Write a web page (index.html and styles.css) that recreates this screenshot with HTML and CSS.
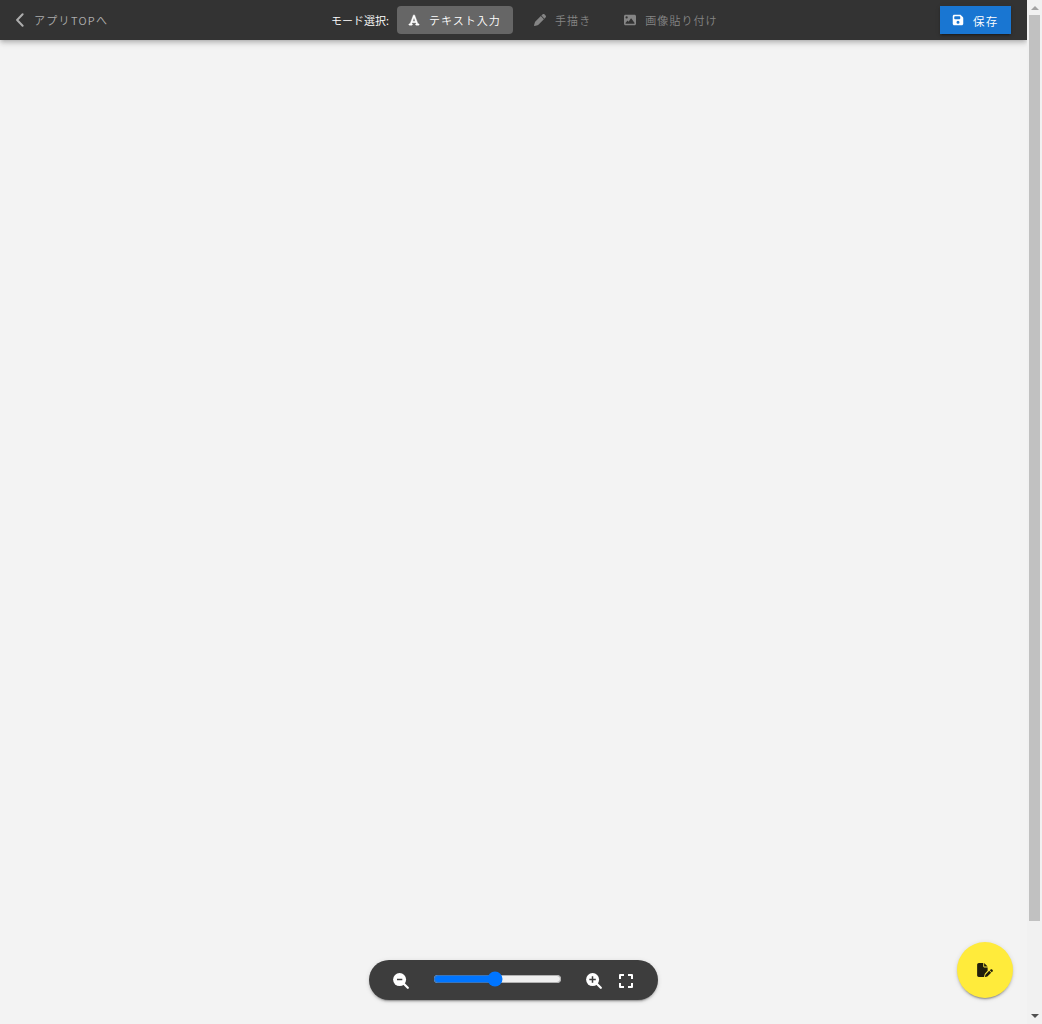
FILE: index.html
```html
<!DOCTYPE html>
<html lang="ja">
<head>
<meta charset="utf-8">
<title>エディター</title>
<link rel="stylesheet" href="styles.css">
</head>
<body>
<div class="app">
  <header class="toolbar">
    <a class="back">
      <svg class="back-icon" viewBox="0 0 8 14"><path d="M6.600 1.200 1.100 7l5.500 5.800" fill="none" stroke="currentColor" stroke-width="2" stroke-linecap="round" stroke-linejoin="round"/></svg>
      <span>アプリTOPへ</span>
    </a>
    <div class="modes">
      <span class="modes-label">モード選択:</span>
      <button class="mode mode-active">
        <svg class="mode-icon mode-icon-text" viewBox="0 0 448 512"><path d="M254 52.800C249.300 40.300 237.300 32 224 32S198.700 40.300 194 52.800L57.800 416H32c-17.700 0-32 14.300-32 32s14.300 32 32 32h96c17.700 0 32-14.300 32-32s-14.300-32-32-32h-1.800l18-48h159.600l18 48H320c-17.700 0-32 14.300-32 32s14.300 32 32 32h96c17.700 0 32-14.300 32-32s-14.300-32-32-32h-25.800L254 52.800zM279.800 304H168.200L224 155.100 279.800 304z" fill="currentColor" stroke="currentColor" stroke-width="16"/></svg>
        <span>テキスト入力</span>
      </button>
      <button class="mode">
        <svg class="mode-icon" viewBox="0 0 512 512"><path fill="currentColor" d="M362.700 19.300 314.300 67.700 444.300 197.700l48.400-48.400c25-25 25-65.500 0-90.500L453.300 19.300c-25-25-65.500-25-90.500 0zM291.700 90.300 58.600 323.500c-10.400 10.400-18 23.300-22.200 37.400L1 481.200C-1.500 489.700.8 498.800 7 505s15.300 8.500 23.700 6.100l120.300-35.400c14.100-4.200 27-11.800 37.400-22.200L421.700 220.300 291.700 90.300z"/></svg>
        <span>手描き</span>
      </button>
      <button class="mode">
        <svg class="mode-icon" viewBox="0 0 512 512"><path fill="currentColor" d="M0 96c0-35.300 28.700-64 64-64h384c35.300 0 64 28.700 64 64v320c0 35.300-28.700 64-64 64H64c-35.300 0-64-28.700-64-64V96zm323.800 106.500c-4.500-6.600-11.900-10.500-19.800-10.500s-15.400 3.900-19.800 10.500l-87 127.600-26.500-33.100c-4.600-5.700-11.500-9-18.700-9s-14.200 3.300-18.700 9l-64 80c-5.800 7.200-6.900 17.100-2.900 25.400S78.800 416 88 416h336c8.900 0 17.100-4.900 21.200-12.800s3.600-17.400-1.400-24.700l-120-176zM112 192a48 48 0 1 0 0-96 48 48 0 1 0 0 96z"/></svg>
        <span>画像貼り付け</span>
      </button>
    </div>
    <button class="save">
      <svg class="save-icon" viewBox="0 0 448 512"><path fill="currentColor" d="M64 32C28.700 32 0 60.700 0 96v320c0 35.300 28.700 64 64 64h320c35.300 0 64-28.700 64-64V173.300c0-17-6.700-33.300-18.700-45.300L352 50.700C340 38.700 323.700 32 306.700 32H64zm0 96c0-17.700 14.300-32 32-32h192c17.700 0 32 14.300 32 32v64c0 17.700-14.300 32-32 32H96c-17.700 0-32-14.300-32-32v-64zm160 160a64 64 0 1 1 0 128 64 64 0 1 1 0-128z"/></svg>
      <span>保存</span>
    </button>
  </header>
  <main class="canvas">
    <div class="zoombar">
      <svg class="zoom-icon" viewBox="0 0 16 16"><circle cx="6.600" cy="6.600" r="6.500" fill="currentColor"/><path d="m10.500 10.500 4.300 4.300" stroke="currentColor" stroke-width="2.200" stroke-linecap="round"/><path class="zoom-sign" d="M4 6.500h5.300"/></svg>
      <input class="zoom-range" type="range" min="0" max="100" value="48">
      <svg class="zoom-icon" viewBox="0 0 16 16"><circle cx="6.600" cy="6.600" r="6.500" fill="currentColor"/><path d="m10.500 10.500 4.300 4.300" stroke="currentColor" stroke-width="2.200" stroke-linecap="round"/><path class="zoom-sign" d="M3.300 6.500h6.500M6.500 3.300v6.500"/></svg>
      <svg class="full-icon" viewBox="0 0 14 14"><path d="M1 5V1h4M9 1h4v4M13 9v4H9M5 13H1V9" fill="none" stroke="currentColor" stroke-width="2" stroke-linejoin="round"/></svg>
    </div>
    <button class="fab">
      <svg class="fab-icon" viewBox="0 0 576 512"><path fill="currentColor" d="M0 64C0 28.700 28.700 0 64 0h160v128c0 17.700 14.300 32 32 32h128v125.700l-86.800 86.800c-10.300 10.300-17.500 23.100-21 37.200l-18.700 74.900c-2.300 9.200-1.800 18.800 1.300 27.500H64c-35.300 0-64-28.700-64-64V64zm384 64H256V0l128 128zm165.800 112.100 14.400 14.400c15.600 15.600 15.600 40.900 0 56.600l-29.400 29.400-71-71 29.400-29.400c15.600-15.600 40.900-15.600 56.600 0zM311.900 417l129.200-129.200 71 71L382.900 487.900c-4.100 4.100-9.200 7-14.900 8.400l-60.100 15c-5.500 1.400-11.200-.2-15.200-4.200s-5.600-9.700-4.200-15.200l15-60.100c1.400-5.600 4.300-10.800 8.400-14.900z"/></svg>
    </button>
  </main>
</div>
<div class="scrollbar">
  <svg class="arrow arrow-up" viewBox="0 0 8 4"><path d="M0 4 4 0l4 4z"/></svg>
  <div class="thumb"></div>
  <svg class="arrow" viewBox="0 0 8 4"><path d="m0 0 4 4 4-4z"/></svg>
</div>
</body>
</html>
```
FILE: styles.css
```css
* { box-sizing: border-box; }

body {
  margin: 0;
  height: 100vh;
  display: flex;
  overflow: hidden;
  background: #f3f3f3;
  font-family: "Noto Sans CJK JP", sans-serif;
  font-size: 11px;
  font-weight: 350;
}

svg { display: block; flex: none; }

button {
  display: flex;
  align-items: center;
  border: 0;
  background: none;
  font: inherit;
  white-space: nowrap;
}

.app {
  flex: 1;
  display: flex;
  flex-direction: column;
  overflow: hidden;
}

.toolbar {
  height: 40px;
  flex: none;
  display: grid;
  grid-template-columns: 331px 1fr auto;
  align-items: center;
  padding-right: 16px;
  background: #333;
  color: #fff;
  box-shadow: 0 2px 4px -1px rgba(0,0,0,.2), 0 4px 5px rgba(0,0,0,.1), 0 1px 8px rgba(0,0,0,.06);
}

.back {
  display: flex;
  align-items: center;
  gap: 10px;
  padding-left: 16px;
  color: #adadad;
  letter-spacing: 1.3px;
}

.back-icon { width: 8px; height: 14px; }

.modes { display: flex; align-items: center; }
.modes-label { margin-right: 8px; }

.mode {
  height: 28px;
  margin-right: 9px;
  padding: 0 12px;
  gap: 9px;
  border-radius: 4px;
  color: #858585;
  letter-spacing: 1.08px;
}

.mode-active { width: 116px; gap: 8px; background: #666; color: #fff; letter-spacing: 1px; }
.mode-icon { width: 12px; height: 12px; }
.mode-icon-text { margin: 0 .5px 0 -.5px; }

.save {
  width: 71px;
  height: 28px;
  padding: 0 0 0 12px;
  gap: 9px;
  background: #1976d2;
  color: #fff;
  font-size: 11.5px;
  letter-spacing: 1.2px;
  box-shadow: 0 3px 1px -2px rgba(0,0,0,.2), 0 2px 2px rgba(0,0,0,.14), 0 1px 5px rgba(0,0,0,.12);
}

.save-icon { width: 12px; height: 12px; }
.save span { padding-top: 1px; }

.canvas {
  flex: 1;
  display: grid;
  grid-template-columns: 1fr auto 1fr;
  align-items: end;
}

.zoombar {
  grid-column: 2;
  width: 289px;
  height: 40px;
  margin-bottom: 24px;
  padding-left: 24px;
  display: flex;
  align-items: center;
  border-radius: 20px;
  background: #3d3d3d;
  color: #fff;
  box-shadow: 0 3px 1px -2px rgba(0,0,0,.2), 0 2px 2px rgba(0,0,0,.14), 0 1px 5px rgba(0,0,0,.12);
}

.zoom-icon { width: 16px; height: 16px; margin-top: 2px; }
.zoom-sign { fill: none; stroke: #3d3d3d; stroke-width: 1.5; }
.zoom-range { width: 129px; height: 16px; margin: 0 24px 2px; }
.full-icon { width: 14px; height: 14px; margin: 2px 0 0 17px; }

.fab {
  grid-column: 3;
  justify-self: end;
  justify-content: center;
  width: 56px;
  height: 56px;
  margin: 0 14px 26px 0;
  padding: 0;
  border-radius: 50%;
  background: #ffeb3b;
  color: #201e0c;
  box-shadow: 0 3px 1px -2px rgba(0,0,0,.2), 0 2px 2px rgba(0,0,0,.14), 0 1px 5px rgba(0,0,0,.12);
}

.fab-icon { width: 16px; height: 14px; }

.scrollbar {
  width: 15px;
  flex: none;
  display: flex;
  flex-direction: column;
  align-items: center;
  padding: 6px 0;
  background: #f1f1f1;
}

.thumb { width: 11px; height: 906px; margin: 5px 0 auto; background: #c1c1c1; }
.arrow { width: 8px; height: 4px; fill: #505050; }
.arrow-up { fill: #a3a3a3; }
```
